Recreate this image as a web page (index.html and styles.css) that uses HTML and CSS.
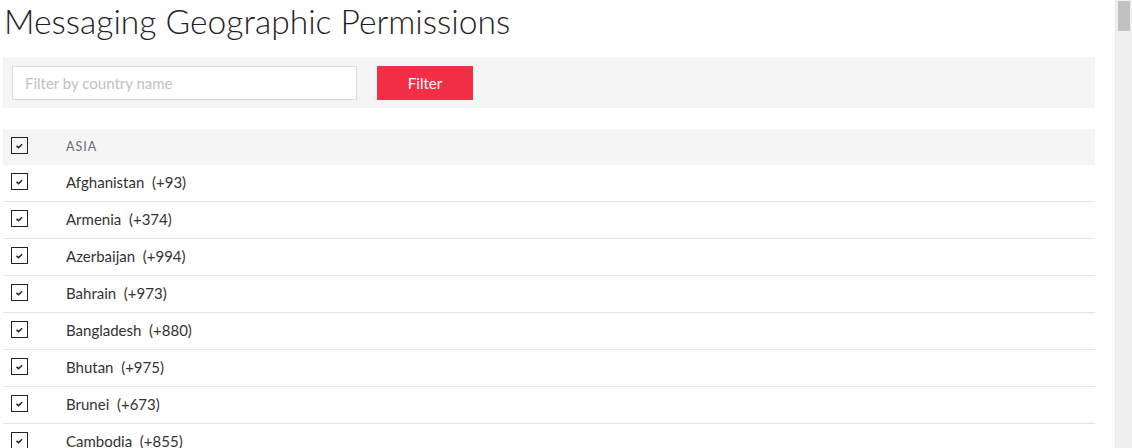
FILE: index.html
```html
<!DOCTYPE html>
<html>
<head>
<meta charset="utf-8">
<link rel="stylesheet" href="styles.css">
</head>
<body>
<div class="page">
<main class="content">
<h1 class="title">Messaging Geographic Permissions</h1>
<div class="filter-bar">
  <input class="filter-input" type="text" placeholder="Filter by country name">
  <button class="filter-btn">Filter</button>
</div>
<div class="list">
  <div class="row header">
    <span class="cb"><svg viewBox="0 0 16 16" width="16" height="16"><path d="M4.8 8.4 L7 10.3 L10.8 6.6" fill="none" stroke="#1f2a44" stroke-width="1.6"/></svg></span>
    <span class="label region">ASIA</span>
  </div>
  <div class="row"><span class="cb"><svg viewBox="0 0 16 16" width="16" height="16"><path d="M4.8 8.4 L7 10.3 L10.8 6.6" fill="none" stroke="#1f2a44" stroke-width="1.6"/></svg></span><span class="label">Afghanistan&nbsp; (+93)</span></div>
  <div class="row"><span class="cb"><svg viewBox="0 0 16 16" width="16" height="16"><path d="M4.8 8.4 L7 10.3 L10.8 6.6" fill="none" stroke="#1f2a44" stroke-width="1.6"/></svg></span><span class="label">Armenia&nbsp; (+374)</span></div>
  <div class="row"><span class="cb"><svg viewBox="0 0 16 16" width="16" height="16"><path d="M4.8 8.4 L7 10.3 L10.8 6.6" fill="none" stroke="#1f2a44" stroke-width="1.6"/></svg></span><span class="label">Azerbaijan&nbsp; (+994)</span></div>
  <div class="row"><span class="cb"><svg viewBox="0 0 16 16" width="16" height="16"><path d="M4.8 8.4 L7 10.3 L10.8 6.6" fill="none" stroke="#1f2a44" stroke-width="1.6"/></svg></span><span class="label">Bahrain&nbsp; (+973)</span></div>
  <div class="row"><span class="cb"><svg viewBox="0 0 16 16" width="16" height="16"><path d="M4.8 8.4 L7 10.3 L10.8 6.6" fill="none" stroke="#1f2a44" stroke-width="1.6"/></svg></span><span class="label">Bangladesh&nbsp; (+880)</span></div>
  <div class="row"><span class="cb"><svg viewBox="0 0 16 16" width="16" height="16"><path d="M4.8 8.4 L7 10.3 L10.8 6.6" fill="none" stroke="#1f2a44" stroke-width="1.6"/></svg></span><span class="label">Bhutan&nbsp; (+975)</span></div>
  <div class="row"><span class="cb"><svg viewBox="0 0 16 16" width="16" height="16"><path d="M4.8 8.4 L7 10.3 L10.8 6.6" fill="none" stroke="#1f2a44" stroke-width="1.6"/></svg></span><span class="label">Brunei&nbsp; (+673)</span></div>
  <div class="row"><span class="cb"><svg viewBox="0 0 16 16" width="16" height="16"><path d="M4.8 8.4 L7 10.3 L10.8 6.6" fill="none" stroke="#1f2a44" stroke-width="1.6"/></svg></span><span class="label">Cambodia&nbsp; (+855)</span></div>
</div>
</main>
<div class="scrollbar"><div class="thumb"></div></div>
</div>
</body>
</html>
```
FILE: styles.css
```css
html, body {
  margin: 0;
  padding: 0;
  background: #ffffff;
  height: 100%;
  overflow: hidden;
}
body {
  font-family: Lato, "Open Sans", sans-serif;
  color: #333333;
}
.page {
  display: flex;
  height: 448px;
}
.content {
  width: 1092px;
  margin-left: 3px;
  margin-right: 20px;
  flex: none;
}
.scrollbar {
  flex: none;
  width: 17px;
  height: 100%;
  background: #f0f0f0;
  border-left: 1px solid #e8e8e8;
  box-sizing: border-box;
  padding: 1px 2px 0 2px;
}
.thumb {
  height: 30px;
  background: #c1c1c1;
}
.title {
  margin: 0;
  padding: 0 0 0 1px;
  height: 57px;
  font-size: 33.6px;
  font-weight: 300;
  line-height: 42px;
  color: #1f2228;
}
.filter-bar {
  background: #f5f5f5;
  height: 51px;
  display: flex;
  align-items: center;
  padding: 0 9px;
  gap: 20px;
  margin-bottom: 21px;
}
.filter-input {
  box-sizing: border-box;
  width: 345px;
  height: 34px;
  border: 1px solid #dcdcdc;
  background: #ffffff;
  padding: 0 12px;
  font-family: Lato, sans-serif;
  font-size: 15px;
  outline: none;
}
.filter-input::placeholder {
  color: #c2c2c2;
}
.filter-btn {
  width: 96px;
  height: 34px;
  border: none;
  background: #f22f46;
  color: #ffffff;
  font-family: Lato, sans-serif;
  font-size: 15px;
  padding: 0;
}
.list {
  display: flex;
  flex-direction: column;
}
.row {
  display: flex;
  align-items: center;
  height: 36px;
  border-bottom: 1px solid #e6e6e6;
}
.row.header {
  background: #f5f5f5;
  border-bottom: none;
  height: 36px;
}
.cb {
  box-sizing: border-box;
  width: 17px;
  height: 17px;
  border: 1px solid #222;
  margin-left: 8px;
  margin-top: -4px;
  display: flex;
  align-items: center;
  justify-content: center;
  flex: none;
}
.cb svg {
  display: block;
  width: 15px;
  height: 15px;
}
.label {
  margin-left: 38px;
  margin-top: -2px;
  font-size: 15px;
  color: #333;
}
.region {
  font-size: 12.5px;
  letter-spacing: 1px;
  color: #666b75;
}
```
